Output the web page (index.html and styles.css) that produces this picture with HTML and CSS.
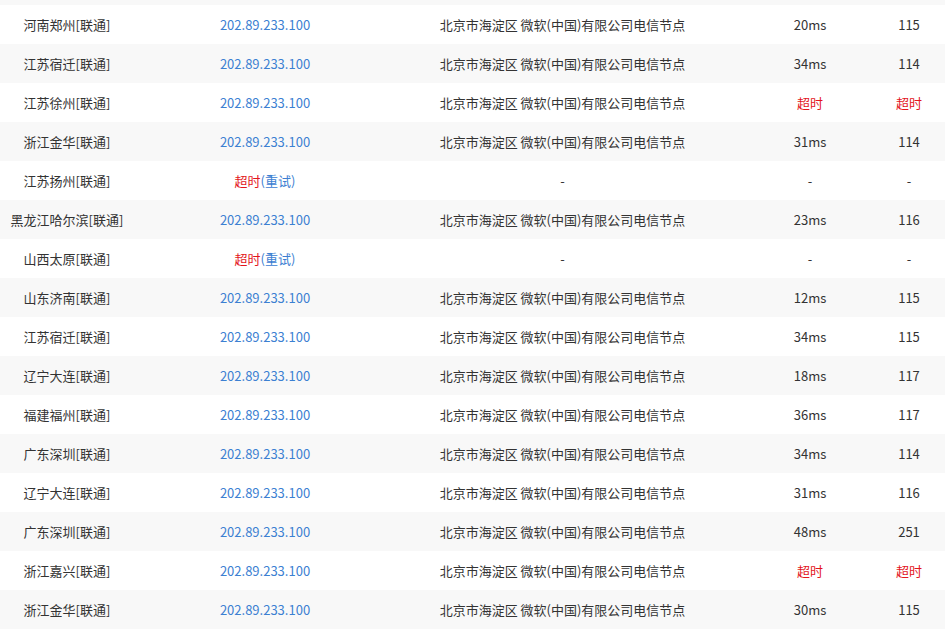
FILE: index.html
```html
<!DOCTYPE html>
<html lang="zh-CN">
<head>
<meta charset="utf-8">
<title>测速结果</title>
<link rel="stylesheet" href="styles.css">
</head>
<body>
<div class="list">
  <div class="row grey top"><span></span><span></span><span></span><span></span><span></span></div>
  <div class="row"><span>河南郑州[联通]</span><span class="ip">202.89.233.100</span><span>北京市海淀区 微软(中国)有限公司电信节点</span><span>20ms</span><span>115</span></div>
  <div class="row grey"><span>江苏宿迁[联通]</span><span class="ip">202.89.233.100</span><span>北京市海淀区 微软(中国)有限公司电信节点</span><span>34ms</span><span>114</span></div>
  <div class="row"><span>江苏徐州[联通]</span><span class="ip">202.89.233.100</span><span>北京市海淀区 微软(中国)有限公司电信节点</span><span class="err">超时</span><span class="err">超时</span></div>
  <div class="row grey"><span>浙江金华[联通]</span><span class="ip">202.89.233.100</span><span>北京市海淀区 微软(中国)有限公司电信节点</span><span>31ms</span><span>114</span></div>
  <div class="row"><span>江苏扬州[联通]</span><span><span class="err">超时</span><span class="ip">(重试)</span></span><span>-</span><span>-</span><span>-</span></div>
  <div class="row grey"><span>黑龙江哈尔滨[联通]</span><span class="ip">202.89.233.100</span><span>北京市海淀区 微软(中国)有限公司电信节点</span><span>23ms</span><span>116</span></div>
  <div class="row"><span>山西太原[联通]</span><span><span class="err">超时</span><span class="ip">(重试)</span></span><span>-</span><span>-</span><span>-</span></div>
  <div class="row grey"><span>山东济南[联通]</span><span class="ip">202.89.233.100</span><span>北京市海淀区 微软(中国)有限公司电信节点</span><span>12ms</span><span>115</span></div>
  <div class="row"><span>江苏宿迁[联通]</span><span class="ip">202.89.233.100</span><span>北京市海淀区 微软(中国)有限公司电信节点</span><span>34ms</span><span>115</span></div>
  <div class="row grey"><span>辽宁大连[联通]</span><span class="ip">202.89.233.100</span><span>北京市海淀区 微软(中国)有限公司电信节点</span><span>18ms</span><span>117</span></div>
  <div class="row"><span>福建福州[联通]</span><span class="ip">202.89.233.100</span><span>北京市海淀区 微软(中国)有限公司电信节点</span><span>36ms</span><span>117</span></div>
  <div class="row grey"><span>广东深圳[联通]</span><span class="ip">202.89.233.100</span><span>北京市海淀区 微软(中国)有限公司电信节点</span><span>34ms</span><span>114</span></div>
  <div class="row"><span>辽宁大连[联通]</span><span class="ip">202.89.233.100</span><span>北京市海淀区 微软(中国)有限公司电信节点</span><span>31ms</span><span>116</span></div>
  <div class="row grey"><span>广东深圳[联通]</span><span class="ip">202.89.233.100</span><span>北京市海淀区 微软(中国)有限公司电信节点</span><span>48ms</span><span>251</span></div>
  <div class="row"><span>浙江嘉兴[联通]</span><span class="ip">202.89.233.100</span><span>北京市海淀区 微软(中国)有限公司电信节点</span><span class="err">超时</span><span class="err">超时</span></div>
  <div class="row grey"><span>浙江金华[联通]</span><span class="ip">202.89.233.100</span><span>北京市海淀区 微软(中国)有限公司电信节点</span><span>30ms</span><span>115</span></div>
  <div class="row bottom"><span></span><span></span><span></span><span></span><span></span></div>
</div>
</body>
</html>
```

FILE: styles.css
```css
html, body {
  margin: 0;
  padding: 0;
  background: #ffffff;
  overflow: hidden;
}
body {
  font-family: "Noto Sans CJK SC", "Noto Sans", sans-serif;
  font-size: 13px;
  color: #333333;
}
.list {
  display: flex;
  flex-direction: column;
}
.row {
  display: grid;
  grid-template-columns: 134px 262px 333px 162px 36px;
  height: 39px;
  line-height: 39px;
  background: #ffffff;
  white-space: nowrap;
}
.row > span {
  text-align: center;
}
.row.grey {
  background: #f8f8f8;
}
.row.top {
  height: 5px;
}
.row.bottom {
  height: 3px;
}
.ip {
  color: #3c80d2;
}
.err {
  color: #e3151c;
}
```
